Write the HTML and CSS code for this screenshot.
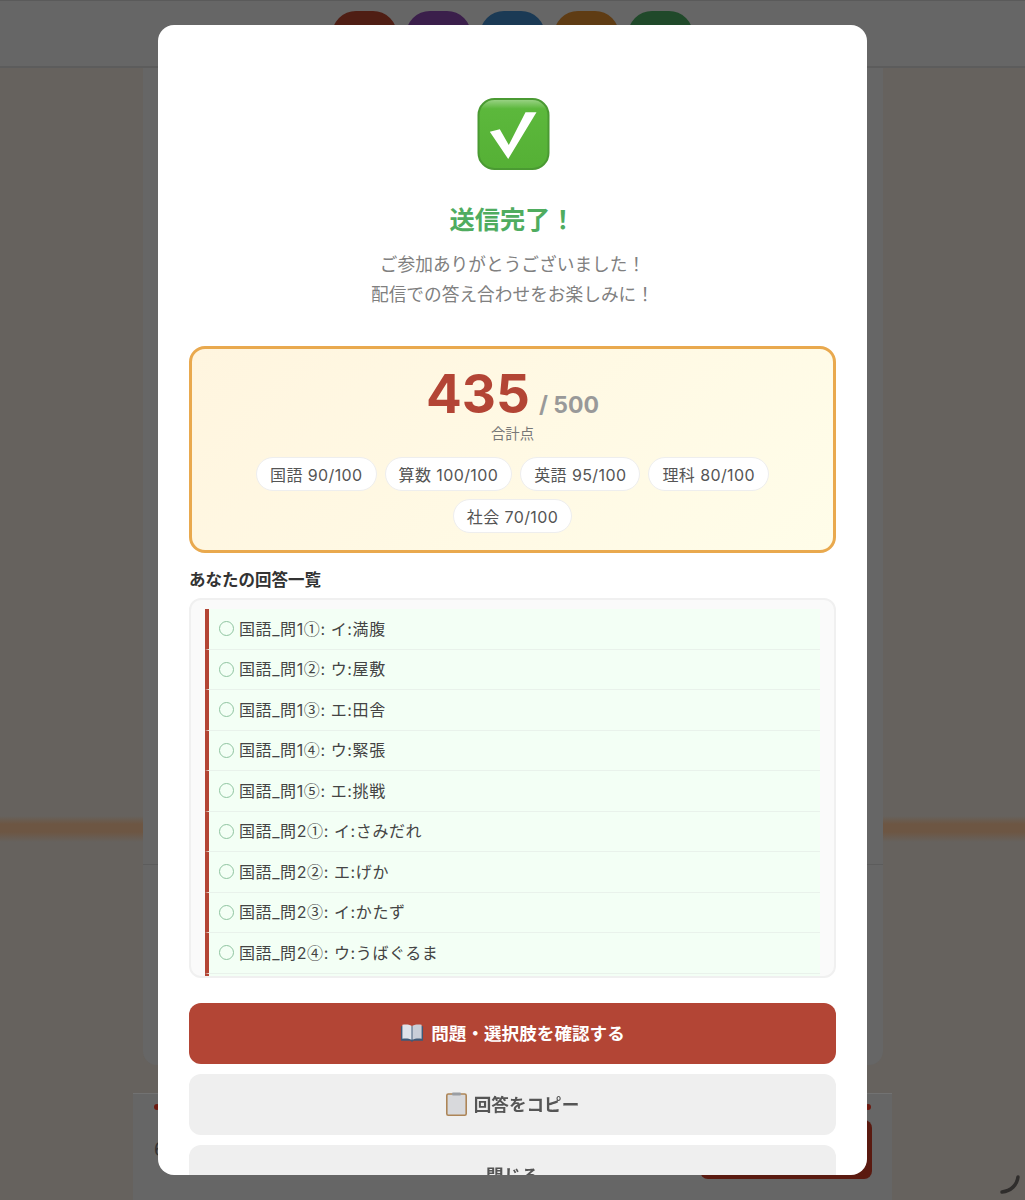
FILE: index.html
```html
<!DOCTYPE html>
<html lang="ja">
<head>
<meta charset="utf-8">
<title>送信完了</title>
<link rel="stylesheet" href="styles.css">
</head>
<body>
<div class="page">
  <header class="topbar">
    <span class="tab tab-red"></span>
    <span class="tab tab-purple"></span>
    <span class="tab tab-blue"></span>
    <span class="tab tab-orange"></span>
    <span class="tab tab-green"></span>
  </header>
  <main class="card"><div class="card-top"></div></main>
  <footer class="footer">
    <div class="dots"><i></i><i></i></div>
    <div class="footer-row"><span class="footer-num">6</span><span class="footer-btn"></span></div>
  </footer>
</div>
<svg class="spinner" width="30" height="26" viewBox="0 0 30 26"><path d="M23 5C22 13 16 19 7 20" fill="none" stroke="#2f2d2c" stroke-width="3.500" stroke-linecap="round"/></svg>

<section class="modal">
  <div class="check-wrap">
    <svg class="check" width="74" height="74" viewBox="0 0 74 74">
      <defs><linearGradient id="g" x1="0" y1="0" x2="0" y2="1"><stop offset="0" stop-color="#9ed48a"/><stop offset=".14" stop-color="#5cb83c"/><stop offset="1" stop-color="#55b035"/></linearGradient></defs>
      <rect x="2.500" y="2" width="70" height="70" rx="16" fill="url(#g)" stroke="#4a9a32" stroke-width="2"/>
      <path d="M13.800 34.700L23.800 32.300L32.800 48L49.500 15.300H60.500L32.200 62z" fill="#fff"/>
    </svg>
  </div>
  <h2 class="title">送信完了！</h2>
  <p class="lead">ご参加ありがとうございました！<br>配信での答え合わせをお楽しみに！</p>

  <div class="score">
    <div class="total"><span class="total-num">435</span><span class="total-max">/ 500</span></div>
    <div class="total-label">合計点</div>
    <div class="chips">
      <span class="chip">国語 90/100</span>
      <span class="chip">算数 100/100</span>
      <span class="chip">英語 95/100</span>
      <span class="chip">理科 80/100</span>
      <span class="chip">社会 70/100</span>
    </div>
  </div>

  <h3 class="answers-title">あなたの回答一覧</h3>
  <div class="answers">
    <div class="answer"><i class="mark"></i>国語_問1<span class="circ">①</span>: イ:満腹</div>
    <div class="answer"><i class="mark"></i>国語_問1<span class="circ">②</span>: ウ:屋敷</div>
    <div class="answer"><i class="mark"></i>国語_問1<span class="circ">③</span>: エ:田舎</div>
    <div class="answer"><i class="mark"></i>国語_問1<span class="circ">④</span>: ウ:緊張</div>
    <div class="answer"><i class="mark"></i>国語_問1<span class="circ">⑤</span>: エ:挑戦</div>
    <div class="answer"><i class="mark"></i>国語_問2<span class="circ">①</span>: イ:さみだれ</div>
    <div class="answer"><i class="mark"></i>国語_問2<span class="circ">②</span>: エ:げか</div>
    <div class="answer"><i class="mark"></i>国語_問2<span class="circ">③</span>: イ:かたず</div>
    <div class="answer"><i class="mark"></i>国語_問2<span class="circ">④</span>: ウ:うばぐるま</div>
    <div class="answer"><i class="mark"></i>国語_問2<span class="circ">⑤</span>: ア:あまど</div>
  </div>

  <div class="actions">
    <button class="btn btn-primary">
      <svg class="ico" width="24" height="20" viewBox="0 0 25 20"><path d="M1 3h23v15H14l-1.500 1.500L11 18H1z" fill="#3f5a78"/><path d="M2.500 1.500c3-.8 7-.6 9.500 1v14.500c-2.500-1.400-6.500-1.600-9.500-1z" fill="#dfe3ea"/><path d="M22.500 1.500c-3-.8-7-.6-9.500 1v14.500c2.500-1.400 6.500-1.600 9.500-1z" fill="#c9ced8"/></svg>
      問題・選択肢を確認する
    </button>
    <button class="btn btn-plain">
      <svg class="ico" width="21" height="24" viewBox="0 0 21 24"><rect x=".8" y="2" width="19.400" height="21.200" rx="1.500" fill="#d8d9dc" stroke="#ad8557" stroke-width="1.600"/><rect x="6" y=".5" width="9" height="3" rx="1" fill="#9a9ea3"/></svg>
      回答をコピー
    </button>
    <button class="btn btn-plain">閉じる</button>
  </div>
</section>
</body>
</html>
```

FILE: styles.css
```css
* { box-sizing: border-box; }
html, body { margin: 0; height: 1200px; overflow: hidden; }
body {
  font-family: Inter, "Noto Sans CJK JP", sans-serif;
  background:
    linear-gradient(to bottom, transparent 816px, #6d5643 824px, #6d5643 832px, transparent 842px),
    #66625e;
}
.page { height: 1200px; display: flex; flex-direction: column; align-items: center; }

.topbar {
  width: 100%;
  height: 68px;
  flex: none;
  padding-top: 10px;
  display: flex;
  justify-content: center;
  gap: 8.500px;
  background: #666;
  border-top: 1px solid #5a5a5a;
  border-bottom: 2px solid #5c5c5c;
}
.tab { width: 65.500px; border-radius: 24px 24px 0 0; }
.tab-red { background: #4f1e14; }
.tab-purple { background: #3b1f4b; }
.tab-blue { background: #1b3a55; }
.tab-orange { background: #5f3c14; }
.tab-green { background: #20492a; }

.card {
  width: 740px;
  height: 997px;
  flex: none;
  background: #666;
  border-radius: 0 0 14px 14px;
}
.card-top { height: 797px; border-bottom: 1px solid #5c5c5c; }

.footer {
  width: 759px;
  margin-top: 28px;
  flex: 1;
  padding: 10px 21px 0;
  background: #666;
  border-top: 1px solid #727272;
}
.dots { display: flex; justify-content: space-between; }
.dots i { width: 6px; height: 6px; border-radius: 50%; background: #6d1a10; }
.footer-row { margin-top: 10px; display: flex; justify-content: space-between; align-items: center; }
.footer-num { font-size: 18px; color: #333; }
.footer-btn { width: 172px; height: 59px; margin-right: -1px; border-radius: 8px; background: #5a1a10; }

.spinner { position: fixed; left: 995px; top: 1172px; }

.modal {
  position: fixed;
  left: 158px;
  top: 25px;
  width: 709px;
  height: 1150px;
  padding: 72px 31px 0;
  overflow: hidden;
  background: #fff;
  border-radius: 16px;
}
.check-wrap { display: flex; justify-content: center; height: 74px; }
.check { display: block; }
.title {
  margin: 31px 0 0;
  text-align: center;
  font-size: 25.200px;
  line-height: 36px;
  font-weight: 700;
  color: #4fac5f;
}
.lead {
  margin: 12px 0 0;
  text-align: center;
  font-size: 17.700px;
  line-height: 30px;
  color: #808080;
}

.score {
  margin-top: 36px;
  height: 207px;
  padding: 13px 20px 0;
  border: 3px solid #e9a94e;
  border-radius: 16px;
  background: linear-gradient(135deg, #fff5df, #fffde9);
  text-align: center;
}
.total { line-height: 64px; height: 64px; }
.total-num { font-size: 53px; font-weight: 700; color: #b34535; }
.total-max { margin-left: 9px; font-size: 23px; font-weight: 700; color: #999; }
.total-label { font-size: 14.400px; line-height: 20px; color: #777; margin-top: -2px; }
.chips { margin-top: 13px; display: flex; flex-wrap: wrap; justify-content: center; gap: 8px; }
.chip {
  height: 34px;
  padding: 0 13px;
  display: flex;
  align-items: center;
  font-size: 16px;
  letter-spacing: .4px;
  color: #555;
  background: #fff;
  border: 1px solid #eee;
  border-radius: 20px;
}

.answers-title {
  margin: 16px 0 0;
  font-size: 16.500px;
  line-height: 22px;
  font-weight: 700;
  color: #333;
}
.answers {
  margin-top: 7px;
  height: 380px;
  padding: 9px 14px 0;
  overflow: hidden;
  background: #fafafa;
  border: 2px solid #f0f0f0;
  border-radius: 12px;
}
.answer {
  height: 40.500px;
  display: flex;
  align-items: center;
  padding: 0 0 2px 10px;
  font-size: 16px;
  letter-spacing: .6px;
  color: #444;
  white-space: pre;
  background: #f3fff5;
  border-left: 4px solid #b34535;
  border-bottom: 1px solid #e9f2eb;
}
.circ { font-family: "Noto Sans CJK JP", sans-serif; }
.mark {
  width: 15px;
  height: 15px;
  margin: 2px 5px 0 0;
  border: 1px solid #8fc4a0;
  border-radius: 50%;
}

.actions { margin-top: 25px; display: flex; flex-direction: column; gap: 10px; }
.btn {
  height: 61px;
  flex: none;
  display: flex;
  align-items: center;
  justify-content: center;
  gap: 7px;
  padding: 0 0 2px;
  border: 0;
  border-radius: 12px;
  font: 700 17.600px Inter, "Noto Sans CJK JP", sans-serif;
}
.btn-primary { color: #fff; background: #b34535; }
.btn-plain { color: #555; background: #efefef; }
.ico { flex: none; }
```
